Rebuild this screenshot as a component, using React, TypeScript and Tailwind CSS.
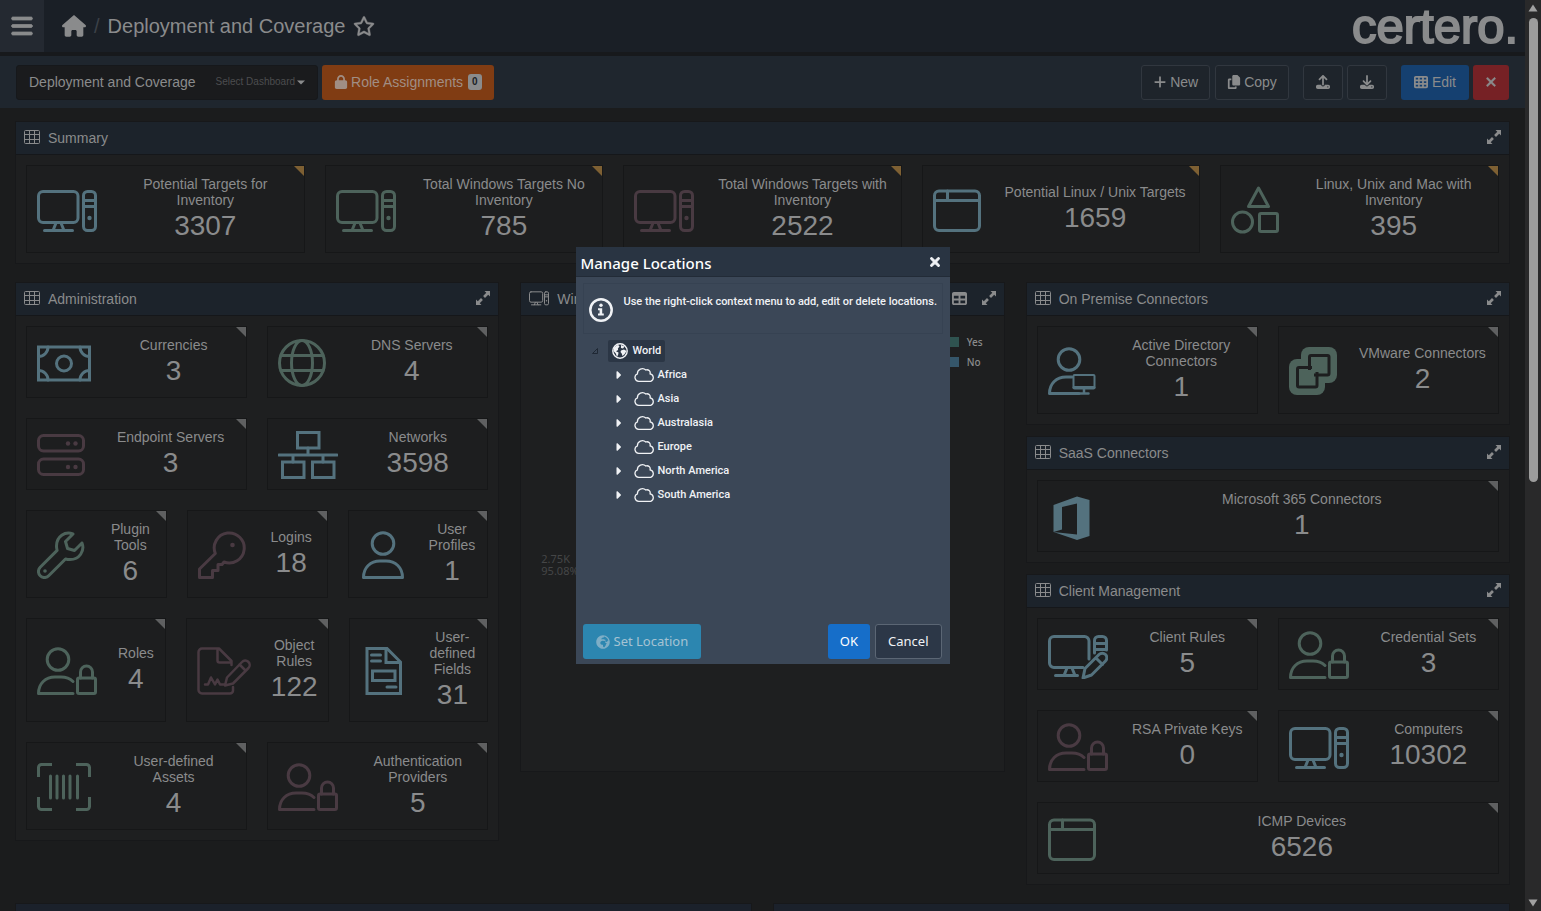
import type { ReactNode } from 'react';
import {
  FaBars,
  FaHouse,
  FaRegStar,
  FaLock,
  FaPlus,
  FaCopy,
  FaUpload,
  FaDownload,
  FaTableCells,
  FaTable,
  FaXmark,
  FaCaretRight,
} from 'react-icons/fa6';
import { FaGlobeAfrica } from 'react-icons/fa';

type Tone = 'blue' | 'green' | 'purple';

interface CardData {
  title: string;
  value: string;
  icon: string;
  tone: Tone;
}

const TONES: Record<Tone, string> = {
  blue: 'text-[#54727e]',
  green: 'text-[#4d635b]',
  purple: 'text-[#493a42]',
};

// Glyphs are drawn 48px tall, width is the first value
const GLYPHS: Record<string, [number, ReactNode]> = {
  computer: [
    60,
    <>
      <rect x="1.5" y="5.5" width="39.5" height="31" rx="4.5" />
      <path d="M19 37l-3 7.5M24 37l3 7.5M7.5 44.5h28" />
      <rect x="46.5" y="5.5" width="12" height="39" rx="4" />
      <path d="M46.5 14.5h12M46.5 20.5h12" />
      <circle cx="52.5" cy="32" r="2.2" fill="currentColor" stroke="none" />
    </>,
  ],
  computerEdit: [
    60,
    <>
      <path d="M35 36.5H6A4.5 4.5 0 0 1 1.5 32V10A4.5 4.5 0 0 1 6 5.5h30.5A4.5 4.5 0 0 1 41 10v18" />
      <path d="M19 37l-3 7.5M24 37l3 7.5M7.5 44.5h22" />
      <path d="M46.5 22V9.5a4 4 0 0 1 4-4h4a4 4 0 0 1 4 4V19M46.5 12.5h12M46.5 18.5h12" />
      <path d="M35 47l2-9.5 14-14a4.5 4.5 0 0 1 6.5 6.5l-14 14zM48 27l6.5 6.5" />
    </>,
  ],
  browser: [
    48,
    <>
      <rect x="1.5" y="5" width="45" height="39.5" rx="4.5" />
      <path d="M1.5 14.5h45M14.5 5v9.5" />
    </>,
  ],
  shapes: [
    48,
    <>
      <path d="M27.5 2l10 18.5h-20z" />
      <circle cx="11.5" cy="36" r="10" />
      <rect x="28.5" y="27.5" width="18" height="18" rx="1.5" />
    </>,
  ],
  money: [
    54,
    <>
      <rect x="1.5" y="8" width="51" height="33" strokeLinejoin="miter" />
      <circle cx="27" cy="24.5" r="7.5" />
      <path d="M11 8a9.5 9.5 0 0 1-9.500 9.5M43 8a9.5 9.5 0 0 0 9.5 9.5M11 41a9.5 9.5 0 0 0-9.500-9.5M43 41a9.5 9.5 0 0 1 9.5-9.5" />
    </>,
  ],
  globe: [
    48,
    <>
      <circle cx="24" cy="24" r="22.5" />
      <ellipse cx="24" cy="24" rx="10.5" ry="22.5" />
      <path d="M3 16.5h42M3 31.5h42" />
    </>,
  ],
  servers: [
    48,
    <>
      <rect x="1.5" y="4.5" width="45" height="15.5" rx="5" />
      <rect x="1.5" y="28" width="45" height="15.5" rx="5" />
      <g fill="currentColor" stroke="none">
        <circle cx="31" cy="12.5" r="2.2" />
        <circle cx="38.5" cy="12.5" r="2.2" />
        <circle cx="31" cy="36" r="2.2" />
        <circle cx="38.5" cy="36" r="2.2" />
      </g>
    </>,
  ],
  network: [
    60,
    <g strokeLinejoin="miter">
      <rect x="19.5" y="1.5" width="21.5" height="15.5" />
      <rect x="4.5" y="31" width="21.5" height="15.5" />
      <rect x="34.5" y="31" width="21.5" height="15.5" />
      <path d="M1 24h58M30 17v7M15 24v7M45 24v7" />
    </g>,
  ],
  wrench: [
    48,
    <>
      <path d="M45 12l-7.5 7.5-7-2-2-7L36 3C28 0 19.500 5.500 19.500 15c0 1.500.2 3 .6 4.400L3.200 36.300a6 6 0 0 0 8.500 8.500L28.500 28c1.400.4 3 .6 4.500.6C42.500 28.500 48 20 45 12z" />
      <circle cx="8" cy="40" r="1.800" fill="currentColor" stroke="none" />
    </>,
  ],
  key: [
    48,
    <>
      <path d="M17.300 22.500A15 15 0 1 1 26 31l-2 2.500h-4v6h-5.500v7h-13v-8.500z" />
      <circle cx="34.5" cy="14" r="2.300" fill="currentColor" stroke="none" />
    </>,
  ],
  user: [
    48,
    <>
      <circle cx="24" cy="12.5" r="10.800" />
      <path d="M4.500 46.500C4.500 36.500 11.500 30 21 30h6c9.500 0 16.500 6.500 16.500 16.500z" />
    </>,
  ],
  userLock: [
    60,
    <>
      <circle cx="21" cy="12.5" r="10.800" />
      <path d="M36 34.500C33 31.500 29 30 24 30h-6C8.500 30 1.500 36.500 1.500 46.500H36" />
      <rect x="40.5" y="31" width="18" height="15.5" rx="1.5" />
      <path d="M43.500 31v-6a6 6 0 0 1 12 0v6" />
    </>,
  ],
  userDesktop: [
    48,
    <>
      <circle cx="21" cy="12.5" r="10.800" />
      <path d="M24 30h-6C8.500 30 1.500 36.500 1.500 46.500H31" />
      <rect x="25.5" y="28" width="21" height="13.5" rx="1" strokeWidth="2" />
      <path d="M26 40.500h20" />
      <path d="M36 42v4M31.500 46.500h9" strokeWidth="2.5" />
    </>,
  ],
  signature: [
    54,
    <g strokeWidth="2.5">
      <path d="M36 40v3.500a3 3 0 0 1-3 3H5a3.500 3.500 0 0 1-3.500-3.500V5A3.500 3.500 0 0 1 5 1.500h17L34.500 14v4M20.500 2v11.500a2 2 0 0 0 2 2h12" />
      <path d="M8 37.500h3l3-7 4 7 2.500-5 2.500 5h5" />
      <path d="M28 38.500l2-8L45 15a4 4 0 0 1 6.500 6L36 36.500zM42.500 17.500l6 6" />
    </g>,
  ],
  form: [
    48,
    <g strokeLinejoin="miter">
      <path d="M7 1.500h20L40.500 15v31.500H7z" />
      <path d="M26 1.500v14h14M11.500 8h9M11.500 14h9M27 40h9" />
      <rect x="12.5" y="24" width="22.5" height="9.5" />
    </g>,
  ],
  barcode: [
    54,
    <>
      <path
        d="M15 1.500H4.500a3 3 0 0 0-3 3V14M39 1.500h10.500a3 3 0 0 1 3 3V14M15 46.500H4.500a3 3 0 0 1-3-3V34M39 46.500h10.500a3 3 0 0 0 3-3V34"
        strokeLinecap="butt"
      />
      <path d="M13.500 13v22M20 13v22M26.500 13v22M33 13v22M40.500 13v22" />
    </>,
  ],
  vmware: [
    48,
    <g stroke="none" fill="currentColor">
      <rect x="12" y="0" width="36" height="36" rx="8" />
      <rect x="0" y="12" width="36" height="36" rx="8" />
      <g stroke="#1d1e1f" strokeWidth="3" fill="none">
        <rect x="20.5" y="8.5" width="19.5" height="19.5" rx="1.5" />
        <rect x="8.5" y="20.5" width="19.5" height="19.5" rx="1.5" />
      </g>
      <rect x="23" y="11" width="14" height="14" />
      <rect x="11" y="23" width="14" height="14" />
    </g>,
  ],
  office: [
    48,
    <path
      d="M5.500 39V12L29 3.500l12.500 3.500v36L29 47 5.500 39l23.500 2.500v-31l-15 3.500v22.500z"
      fill="currentColor"
      stroke="none"
    />,
  ],
};

const SUMMARY: CardData[] = [
  { title: 'Potential Targets for Inventory', value: '3307', icon: 'computer', tone: 'blue' },
  { title: 'Total Windows Targets No Inventory', value: '785', icon: 'computer', tone: 'green' },
  { title: 'Total Windows Targets with Inventory', value: '2522', icon: 'computer', tone: 'purple' },
  { title: 'Potential Linux / Unix Targets', value: '1659', icon: 'browser', tone: 'blue' },
  { title: 'Linux, Unix and Mac with Inventory', value: '395', icon: 'shapes', tone: 'green' },
];

const ADMINISTRATION: CardData[][] = [
  [
    { title: 'Currencies', value: '3', icon: 'money', tone: 'blue' },
    { title: 'DNS Servers', value: '4', icon: 'globe', tone: 'green' },
  ],
  [
    { title: 'Endpoint Servers', value: '3', icon: 'servers', tone: 'purple' },
    { title: 'Networks', value: '3598', icon: 'network', tone: 'blue' },
  ],
  [
    { title: 'Plugin Tools', value: '6', icon: 'wrench', tone: 'green' },
    { title: 'Logins', value: '18', icon: 'key', tone: 'purple' },
    { title: 'User Profiles', value: '1', icon: 'user', tone: 'blue' },
  ],
  [
    { title: 'Roles', value: '4', icon: 'userLock', tone: 'green' },
    { title: 'Object Rules', value: '122', icon: 'signature', tone: 'purple' },
    { title: 'User-defined Fields', value: '31', icon: 'form', tone: 'blue' },
  ],
  [
    { title: 'User-defined\nAssets', value: '4', icon: 'barcode', tone: 'green' },
    { title: 'Authentication Providers', value: '5', icon: 'userLock', tone: 'purple' },
  ],
];

const ON_PREMISE: CardData[][] = [
  [
    { title: 'Active Directory Connectors', value: '1', icon: 'userDesktop', tone: 'blue' },
    { title: 'VMware Connectors', value: '2', icon: 'vmware', tone: 'green' },
  ],
];

const SAAS: CardData[][] = [
  [{ title: 'Microsoft 365 Connectors', value: '1', icon: 'office', tone: 'blue' }],
];

const CLIENTS: CardData[][] = [
  [
    { title: 'Client Rules', value: '5', icon: 'computerEdit', tone: 'blue' },
    { title: 'Credential Sets', value: '3', icon: 'userLock', tone: 'green' },
  ],
  [
    { title: 'RSA Private Keys', value: '0', icon: 'userLock', tone: 'purple' },
    { title: 'Computers', value: '10302', icon: 'computer', tone: 'blue' },
  ],
  [{ title: 'ICMP Devices', value: '6526', icon: 'browser', tone: 'green' }],
];

const REGIONS = ['Africa', 'Asia', 'Australasia', 'Europe', 'North America', 'South America'];

function Glyph({ name, className }: { name: string; className?: string }) {
  const [width, shape] = GLYPHS[name];
  return (
    <svg
      viewBox={`0 0 ${width} 48`}
      className={className}
      fill="none"
      stroke="currentColor"
      strokeWidth="3"
      strokeLinecap="round"
      strokeLinejoin="round"
      aria-hidden="true"
    >
      {shape}
    </svg>
  );
}

function GridIcon() {
  return (
    <svg viewBox="0 0 16 14" className="mb-0.5 h-[14px] w-4" fill="none" stroke="currentColor" aria-hidden="true">
      <rect x="0.5" y="0.5" width="15" height="13" rx="1" />
      <path d="M0.5 4.5h15M0.5 9.5h15M5.5 0.5v13M10.5 0.5v13" />
    </svg>
  );
}

function ExpandIcon() {
  return (
    <svg viewBox="0 0 16 16" className="mb-0.5 size-4" fill="currentColor" aria-hidden="true">
      <path d="M9.500 1H15v5.500l-1.800-1.800-3.200 3.200L8.100 6l3.200-3.200zM6.500 15H1V9.500l1.800 1.800L6 8.100 7.900 10l-3.200 3.200z" />
    </svg>
  );
}

function WorldIcon() {
  return (
    <svg viewBox="0 0 16 16" className="size-4" fill="currentColor" aria-hidden="true">
      <circle cx="8" cy="8" r="7.200" fill="none" stroke="currentColor" strokeWidth="1.400" />
      <path d="M2 4.500l4-2.700 1.500 1.700-1.600 2 .2 1.500L4 8.200 6.500 9.500l-.3 2L5 14 3.800 10.500 1.500 8z" />
      <path d="M9 2l3.500 1.500L11 5.500 9 5zM9 7.500l3-1 2.500 1.500-1.800 3-2.200 2L9.700 10.500 8.500 9z" />
    </svg>
  );
}

function StatCard({ card, corner }: { card: CardData; corner: string }) {
  return (
    <div className="relative flex flex-1 items-center gap-5 border border-[#161718] bg-[#1d1e1f] px-[10px] pt-[10px] pb-[9px]">
      <Glyph name={card.icon} className={`h-12 shrink-0 ${TONES[card.tone]}`} />
      <div className="flex-1 text-center">
        <div className="text-sm leading-4 whitespace-pre-line">{card.title}</div>
        <div className="text-[28px] leading-[35px]">{card.value}</div>
      </div>
      <span className={`absolute top-0 right-0 border-t-[10px] border-l-[10px] border-l-transparent ${corner}`} />
    </div>
  );
}

interface PanelProps {
  title: string;
  icon?: ReactNode;
  actions?: ReactNode;
  className?: string;
  children: ReactNode;
}

function Panel({ title, icon, actions, className = '', children }: PanelProps) {
  return (
    <section className={`flex flex-col border border-[#17181a] bg-[#1e1f20] ${className}`}>
      <header className="flex h-[33px] items-center justify-between border-b border-[#15171a] bg-[#1c232b] px-[7px]">
        <h2 className="flex items-center gap-2 pl-px text-sm">
          {icon ?? <GridIcon />}
          {title}
        </h2>
        <div className="flex items-center gap-[14px]">
          {actions}
          <button aria-label={`Expand ${title}`}>
            <ExpandIcon />
          </button>
        </div>
      </header>
      {children}
    </section>
  );
}

function CardRows({ rows }: { rows: CardData[][] }) {
  return (
    <div className="flex flex-col gap-5 p-[10px]">
      {rows.map((row) => (
        <div key={row[0].title} className="flex gap-5">
          {row.map((card) => (
            <StatCard key={card.title} card={card} corner="border-t-[#5f6061]" />
          ))}
        </div>
      ))}
    </div>
  );
}

function CoveragePanel() {
  return (
    <Panel
      title="Windows"
      icon={<Glyph name="computer" className="mb-0.5 h-4 w-5" />}
      className="h-[490px]"
      actions={
        <button aria-label="Show as table">
          <FaTable className="mb-0.5 size-[15px]" />
        </button>
      }
    >
      <div className="flex flex-1 flex-col justify-between p-5 font-['Noto_Sans',sans-serif]">
        <ul className="flex w-[35px] flex-col gap-2 self-end text-[10px] leading-3 font-medium">
          <li className="flex items-center gap-2">
            <span className="size-[10px] bg-[#2f5350]" />
            Yes
          </li>
          <li className="flex items-center gap-2">
            <span className="size-[10px] bg-[#35566a]" />
            No
          </li>
        </ul>
        <p className="mb-[174px] text-[11px] leading-3 text-[#454647]">
          2.75K
          <br />
          95.08%
        </p>
      </div>
    </Panel>
  );
}

function LocationsDialog() {
  return (
    <div
      role="dialog"
      aria-label="Manage Locations"
      className="flex h-[417px] w-[374px] flex-col bg-[#3b4757] font-['Noto_Sans',sans-serif] text-[#f0f2f5]"
    >
      <header className="flex h-[30px] items-center justify-between border-b border-[#222b37] bg-[#293442] pr-2 pl-[5px]">
        <h2 className="pt-[2px] text-[15px] leading-5 font-medium text-white">Manage Locations</h2>
        <button aria-label="Close">
          <FaXmark className="size-[14px]" stroke="currentColor" strokeWidth="40" />
        </button>
      </header>

      <div className="mx-[7px] mt-[6px] flex h-[51px] items-center gap-[11px] border border-[#364252] pl-[5px]">
        <svg viewBox="0 0 24 24" className="mt-[2px] size-6 shrink-0" fill="currentColor" aria-hidden="true">
          <circle cx="12" cy="12" r="10.7" fill="none" stroke="currentColor" strokeWidth="2.5" />
          <circle cx="12" cy="7.3" r="1.700" />
          <path d="M9 10.200h4.200v5.300h1.600v2H9v-2h1.600v-3.300H9z" />
        </svg>
        <p className="mb-[14px] font-[Roboto,sans-serif] text-[11px] leading-4 font-medium whitespace-nowrap">
          Use the right-click context menu to add, edit or delete locations.
        </p>
      </div>

      <ul className="flex-1 pt-[5px] pl-4 font-[Roboto,sans-serif] text-[11px] font-medium">
        <li>
          <div className="flex h-6 items-center gap-[10px]">
            <svg viewBox="0 0 6 6" className="size-[6px]" fill="none" stroke="#1f2834" aria-hidden="true">
              <path d="M5.5 0.5v5h-5z" />
            </svg>
            <span className="flex h-[22px] items-center gap-[5px] rounded-xs bg-[#2b3645] px-1">
              <WorldIcon />
              World
            </span>
          </div>
          <ul>
            {REGIONS.map((region) => (
              <li key={region} className="flex h-6 items-center pl-5">
                <FaCaretRight className="size-3" />
                <svg
                  viewBox="0 0 21 16"
                  className="mr-[3px] ml-[10px] h-4 w-[21px]"
                  fill="none"
                  stroke="currentColor"
                  strokeWidth="1.3"
                  aria-hidden="true"
                >
                  <path d="M4.800 14.300a3.900 3.900 0 0 1-1.400-7.500A5 5 0 0 1 11.800 3a3.200 3.200 0 0 1 4.300 3.800 3.900 3.900 0 0 1 .6 7.500z" />
                </svg>
                {region}
              </li>
            ))}
          </ul>
        </li>
      </ul>

      <footer className="flex gap-[5px] pr-2 pb-[5px] pl-[7px] text-[13px]">
        <button className="mr-auto flex h-[35px] items-center gap-1 rounded-[3px] bg-[#2c86b0] px-[13px] text-[#a5c3d3]">
          <FaGlobeAfrica className="size-[14px] text-[#7eaec6]" />
          Set Location
        </button>
        <button className="h-[35px] rounded-[3px] bg-[#166ec9] px-3 text-white">OK</button>
        <button className="h-[35px] rounded-[3px] border border-[#5b6674] bg-[#2c3747] px-3">Cancel</button>
      </footer>
    </div>
  );
}

export default function App() {
  return (
    <div className="flex h-screen overflow-hidden bg-[#1b1c1d] font-['Liberation_Sans',Arial,sans-serif] text-[#8a8b8c]">
      <div className="relative min-w-0 flex-1 overflow-hidden">
        {/* Title bar */}
        <header className="flex h-14 items-center border-b-4 border-[#17191c] bg-[#1a1f26] pr-[3px]">
          <button aria-label="Menu" className="flex h-full w-11 items-center justify-center bg-[#242931]">
            <FaBars className="size-6" stroke="currentColor" strokeWidth="16" />
          </button>
          <nav className="ml-[18px] flex items-center gap-2">
            <a href="#home" aria-label="Home">
              <FaHouse className="size-6" />
            </a>
            <span className="text-xl text-[#3c4148]">/</span>
            <h1 className="text-xl">Deployment and Coverage</h1>
            <button aria-label="Favourite">
              <FaRegStar className="size-[22px]" stroke="currentColor" strokeWidth="10" />
            </button>
          </nav>
          <svg viewBox="0 0 170 52" className="ml-auto h-[52px] w-[170px] overflow-visible" role="img" aria-label="certero">
            <text
              x="0"
              y="43"
              fontSize="49"
              fill="currentColor"
              stroke="currentColor"
              strokeWidth="2"
              className="font-['Liberation_Sans',Arial,sans-serif]"
            >
              certero.
            </text>
          </svg>
        </header>

        {/* Dashboard toolbar */}
        <div className="flex h-[52px] items-center gap-1 bg-[#1f262e] px-4 text-sm">
          <button
            aria-haspopup="listbox"
            className="flex h-[35px] items-center rounded-[3px] border border-[#16181b] bg-[#1a1b1d] px-3"
          >
            Deployment and Coverage
            <span className="ml-5 text-[10px] text-[#4c4d4f]">Select Dashboard</span>
            <svg viewBox="0 0 8 5" className="ml-[2px] h-[5px] w-2" fill="currentColor" aria-hidden="true">
              <path d="M0 0.500h8L4 4.500z" />
            </svg>
          </button>
          <button className="flex h-[35px] items-center gap-[3px] rounded-[3px] bg-[#803c13] px-3 text-[#a08e84]">
            <FaLock className="size-[14px]" />
            Role Assignments
            <span className="ml-[2px] rounded-[3px] bg-[#8a8b8c] px-[4px] text-[10px] leading-4 font-bold text-[#1a1f26]">0</span>
          </button>

          <div className="ml-auto flex gap-[14px]">
            <div className="flex gap-[5px]">
              <button className="flex h-[35px] items-center gap-[3px] rounded-[3px] border border-[#31373f] bg-[#1e242b] px-[11px]">
                <FaPlus className="size-[14px]" />
                New
              </button>
              <button className="flex h-[35px] items-center gap-[3px] rounded-[3px] border border-[#31373f] bg-[#1e242b] px-[11px]">
                <FaCopy className="size-[14px]" />
                Copy
              </button>
            </div>
            <div className="flex gap-1">
              <button
                aria-label="Import"
                className="flex h-[35px] w-10 items-center justify-center rounded-[3px] border border-[#31373f] bg-[#1e242b]"
              >
                <FaUpload className="size-[14px]" />
              </button>
              <button
                aria-label="Export"
                className="flex h-[35px] w-10 items-center justify-center rounded-[3px] border border-[#31373f] bg-[#1e242b]"
              >
                <FaDownload className="size-[14px]" />
              </button>
            </div>
            <div className="flex gap-1">
              <button className="flex h-[35px] items-center gap-1 rounded-[3px] bg-[#154070] px-[13px]">
                <FaTableCells className="size-[14px]" />
                Edit
              </button>
              <button
                aria-label="Close dashboard"
                className="flex h-[35px] w-9 items-center justify-center rounded-[3px] bg-[#762125]"
              >
                <FaXmark className="size-[14px]" stroke="currentColor" strokeWidth="24" />
              </button>
            </div>
          </div>
        </div>

        {/* Dashboard */}
        <main className="flex flex-col gap-[18px] px-[15px] pt-[13px]">
          <Panel title="Summary">
            <div className="flex gap-5 p-[10px]">
              {SUMMARY.map((card) => (
                <StatCard key={card.title} card={card} corner="border-t-[#7e6033]" />
              ))}
            </div>
          </Panel>

          <div className="grid grid-cols-3 items-start gap-[21px]">
            <Panel title="Administration">
              <CardRows rows={ADMINISTRATION} />
            </Panel>
            <CoveragePanel />
            <div className="flex flex-col gap-[11px]">
              <Panel title="On Premise Connectors">
                <CardRows rows={ON_PREMISE} />
              </Panel>
              <Panel title="SaaS Connectors">
                <CardRows rows={SAAS} />
              </Panel>
              <Panel title="Client Management">
                <CardRows rows={CLIENTS} />
              </Panel>
            </div>
          </div>

          <div className="grid grid-cols-2 gap-[21px]">
            <section className="h-[34px] border border-[#17181a] bg-[#1b212b]" />
            <section className="h-[34px] border border-[#17181a] bg-[#1b212b]" />
          </div>
        </main>

        <div className="absolute inset-0 flex items-center justify-center">
          <LocationsDialog />
        </div>
      </div>

      {/* Scroll bar */}
      <div className="flex w-4 flex-col items-center bg-[#29292a] py-1 text-[#a0a0a0]">
        <svg viewBox="0 0 10 8" className="h-2 w-[10px]" fill="currentColor" aria-hidden="true">
          <path d="M5 0.5L9.5 7.5h-9z" />
        </svg>
        <div className="my-[6px] flex w-[9px] flex-1 flex-col">
          <div className="h-[53%] rounded-full bg-[#9c9c9c]" />
        </div>
        <svg viewBox="0 0 10 8" className="h-2 w-[10px]" fill="currentColor" aria-hidden="true">
          <path d="M5 7.5L0.5 0.5h9z" />
        </svg>
      </div>
    </div>
  );
}
